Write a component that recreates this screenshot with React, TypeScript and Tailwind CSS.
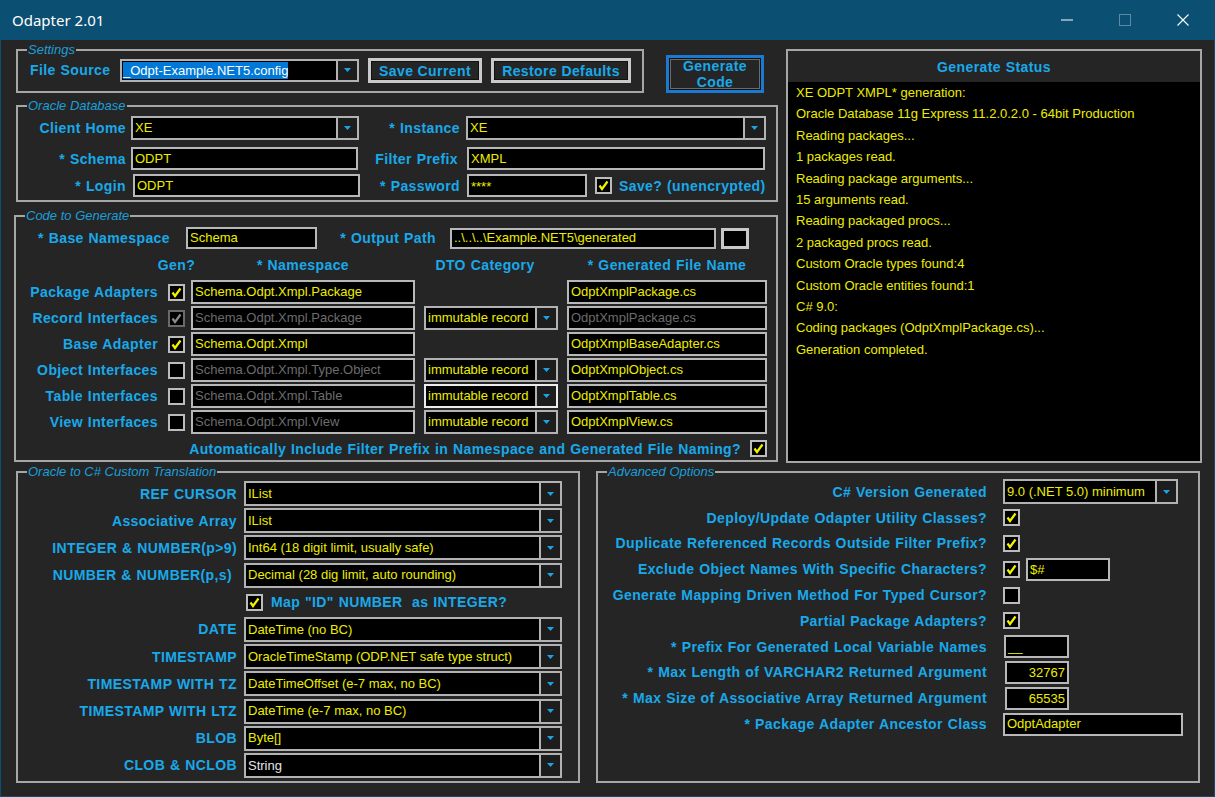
import React from 'react';

type Tone = 'yellow' | 'dim' | 'white';

const toneClass = (t: Tone) =>
  t === 'dim' ? 'text-[#6c6c6c]' : t === 'white' ? 'text-[#e4e4e4]' : 'text-[#eded00]';

function Arrow() {
  return (
    <svg width="7" height="4" viewBox="0 0 7 4">
      <path d="M0 0H7L3.5 4Z" fill="#1ba3e3" />
    </svg>
  );
}

function Lbl({ className = '', children }: { className?: string; children?: React.ReactNode }) {
  return (
    <span
      className={`shrink-0 whitespace-nowrap text-[14px] font-bold leading-[16px] tracking-[0.4px] text-[#19a9ea] [word-spacing:0.5px] ${className}`}
    >
      {children}
    </span>
  );
}

function Combo({ className, value, tone = 'yellow', hot }: { className: string; value: string; tone?: Tone; hot?: boolean }) {
  return (
    <div className={`flex shrink-0 border-2 bg-black ${hot ? 'border-[#ececec]' : 'border-[#b2b2b2]'} ${className}`}>
      <div className={`flex flex-1 items-center overflow-hidden whitespace-nowrap pl-[2px] text-[13px] ${toneClass(tone)}`}>
        {value}
      </div>
      <div className="flex w-[21px] items-center justify-center border-l-2 border-[#b2b2b2] bg-[#1d1d1d]">
        <Arrow />
      </div>
    </div>
  );
}

function TextBox({ className, value, tone = 'yellow', right }: { className: string; value: string; tone?: Tone; right?: boolean }) {
  return (
    <div
      className={`flex shrink-0 items-center overflow-hidden whitespace-nowrap border-2 border-[#b8b8b8] bg-black px-[2px] text-[13px] ${
        right ? 'justify-end' : ''
      } ${toneClass(tone)} ${className}`}
    >
      {value}
    </div>
  );
}

function Check({ on, dim, className = '' }: { on?: boolean; dim?: boolean; className?: string }) {
  return (
    <div
      className={`flex h-[17px] w-[17px] shrink-0 items-center justify-center border-2 bg-black ${
        dim ? 'border-[#6a6a6a]' : 'border-[#bcbcbc]'
      } ${className}`}
    >
      {on && (
        <svg width="11" height="11" viewBox="0 0 11 11">
          <path d="M1.5 5.5L4 9L9.5 1.5" fill="none" stroke={dim ? '#8a8a8a' : '#f2f200'} strokeWidth="2.2" />
        </svg>
      )}
    </div>
  );
}

function Group({ title, className, children }: { title: string; className: string; children?: React.ReactNode }) {
  return (
    <fieldset className={`shrink-0 border-2 border-[#a6a6a6] ${className}`}>
      <legend className="ml-[9px] px-[1px] text-[13px] italic leading-[14px] text-[#1b9fd9]">{title}</legend>
      {children}
    </fieldset>
  );
}

const genRows: {
  label: string;
  on: boolean;
  chkDim?: boolean;
  ns: string;
  nsTone: Tone;
  dto: string | null;
  hot?: boolean;
  file: string;
  fileTone: Tone;
}[] = [
  { label: 'Package Adapters', on: true, ns: 'Schema.Odpt.Xmpl.Package', nsTone: 'yellow', dto: null, file: 'OdptXmplPackage.cs', fileTone: 'yellow' },
  { label: 'Record Interfaces', on: true, chkDim: true, ns: 'Schema.Odpt.Xmpl.Package', nsTone: 'dim', dto: 'immutable record', file: 'OdptXmplPackage.cs', fileTone: 'dim' },
  { label: 'Base Adapter', on: true, ns: 'Schema.Odpt.Xmpl', nsTone: 'yellow', dto: null, file: 'OdptXmplBaseAdapter.cs', fileTone: 'yellow' },
  { label: 'Object Interfaces', on: false, ns: 'Schema.Odpt.Xmpl.Type.Object', nsTone: 'dim', dto: 'immutable record', file: 'OdptXmplObject.cs', fileTone: 'yellow' },
  { label: 'Table Interfaces', on: false, ns: 'Schema.Odpt.Xmpl.Table', nsTone: 'dim', dto: 'immutable record', hot: true, file: 'OdptXmplTable.cs', fileTone: 'yellow' },
  { label: 'View Interfaces', on: false, ns: 'Schema.Odpt.Xmpl.View', nsTone: 'dim', dto: 'immutable record', file: 'OdptXmplView.cs', fileTone: 'yellow' },
];

const statusLines = [
  'XE ODPT XMPL* generation:',
  'Oracle Database 11g Express 11.2.0.2.0 - 64bit Production',
  'Reading packages...',
  '1 packages read.',
  'Reading package arguments...',
  '15 arguments read.',
  'Reading packaged procs...',
  '2 packaged procs read.',
  'Custom Oracle types found:4',
  'Custom Oracle entities found:1',
  'C# 9.0:',
  'Coding packages (OdptXmplPackage.cs)...',
  'Generation completed.',
];

const typeMap: { label: string; value: string; tone?: Tone; pad?: boolean }[] = [
  { label: 'REF CURSOR', value: 'IList' },
  { label: 'Associative Array', value: 'IList' },
  { label: 'INTEGER & NUMBER(p>9)', value: 'Int64 (18 digit limit, usually safe)' },
  { label: 'NUMBER & NUMBER(p,s)', value: 'Decimal (28 dig limit, auto rounding)', pad: true },
];

const typeMap2: { label: string; value: string; tone?: Tone }[] = [
  { label: 'DATE', value: 'DateTime (no BC)' },
  { label: 'TIMESTAMP', value: 'OracleTimeStamp (ODP.NET safe type struct)' },
  { label: 'TIMESTAMP WITH TZ', value: 'DateTimeOffset (e-7 max, no BC)' },
  { label: 'TIMESTAMP WITH LTZ', value: 'DateTime (e-7 max, no BC)' },
  { label: 'BLOB', value: 'Byte[]' },
  { label: 'CLOB & NCLOB', value: 'String', tone: 'white' },
];

function TypeRow({ label, value, tone, pad }: { label: string; value: string; tone?: Tone; pad?: boolean }) {
  return (
    <div className="flex h-[25px] items-center">
      <Lbl className={`w-[219px] text-right ${pad ? 'pr-[5px]' : ''}`}>{label}</Lbl>
      <Combo className="ml-[7px] h-[25px] w-[318px]" value={value} tone={tone} />
    </div>
  );
}

function AdvRow({ label, children }: { label: string; children?: React.ReactNode }) {
  return (
    <div className="flex h-[25.8px] items-center">
      <Lbl className="w-[389px] text-right">{label}</Lbl>
      <div className="ml-[16px] flex items-center">{children}</div>
    </div>
  );
}

const btn =
  'shrink-0 border-[3px] border-[#cacaca] bg-[#252525] text-[14px] font-bold tracking-[0.4px] text-[#19a9ea] shadow-[inset_0_0_0_1px_#111]';

export default function App() {
  return (
    <div className="flex h-[797px] w-[1215px] flex-col overflow-hidden bg-[#0b4f73] font-['Liberation_Sans',Arial,sans-serif]">
      {/* title bar */}
      <div className="flex h-[40px] shrink-0 items-center">
        <span className="ml-[12px] font-['Noto_Sans',sans-serif] text-[15px] text-white">Odapter 2.01</span>
        <div className="ml-auto mr-[3px] flex h-full">
          <div className="flex w-[58px] items-center justify-center">
            <svg width="12" height="2" viewBox="0 0 12 2">
              <path d="M0 1H12" stroke="#ffffff" strokeWidth="1" />
            </svg>
          </div>
          <div className="flex w-[58px] items-center justify-center">
            <svg width="12" height="12" viewBox="0 0 12 12">
              <rect x="0.5" y="0.5" width="11" height="11" fill="none" stroke="#5f8aa3" strokeWidth="1" />
            </svg>
          </div>
          <div className="flex w-[58px] items-center justify-center">
            <svg width="12" height="12" viewBox="0 0 12 12">
              <path d="M0.5 0.5L11.5 11.5M11.5 0.5L0.5 11.5" stroke="#ffffff" strokeWidth="1.1" />
            </svg>
          </div>
        </div>
      </div>

      {/* window body */}
      <div className="flex flex-1 flex-col border-x border-b border-[#0b4f73] bg-[#252525]">
        <div className="flex">
          <div className="ml-[13px] flex w-[764px] flex-col">
            {/* Settings + Generate */}
            <div className="mt-[3px] flex items-start">
              <Group title="Settings" className="ml-[2px] h-[50px] w-[628px]">
                <div className="flex h-[25px] items-center pl-[12px] pt-[1px]">
                  <Lbl className="w-[90px]">File Source</Lbl>
                  <div className="flex h-[23px] w-[239px] shrink-0 border-2 border-[#b2b2b2] bg-black">
                    <div className="flex flex-1 items-center pl-[1px]">
                      <span className="bg-[#0078d7] text-[13px] leading-[17px] text-white">_Odpt-Example.NET5.config</span>
                    </div>
                    <div className="flex w-[21px] items-center justify-center border-l-2 border-[#b2b2b2] bg-[#1d1d1d]">
                      <Arrow />
                    </div>
                  </div>
                  <button className={`ml-[9px] h-[25px] w-[114px] ${btn}`}>Save Current</button>
                  <button className={`ml-[9px] h-[25px] w-[140px] ${btn}`}>Restore Defaults</button>
                </div>
              </Group>
              <button className="ml-[22px] mt-[12px] flex h-[38px] w-[98px] shrink-0 flex-col items-center justify-center border-[3px] border-[#1a7ad2] bg-[#252525] text-[14px] font-bold leading-[16px] tracking-[0.4px] text-[#19a9ea] shadow-[inset_0_0_0_1px_#111,inset_0_0_0_2px_#6a6a6a]">
                <span>Generate</span>
                <span>Code</span>
              </button>
            </div>

            {/* Oracle Database */}
            <Group title="Oracle Database" className="ml-[2px] mt-[6px] h-[103px] w-[762px]">
              <div className="flex flex-col pt-[3px]">
                <div className="flex h-[24px] items-center">
                  <Lbl className="w-[108px] text-right">Client Home</Lbl>
                  <Combo className="ml-[5px] h-[24px] w-[228px]" value="XE" />
                  <Lbl className="w-[101px] text-right">* Instance</Lbl>
                  <Combo className="ml-[6px] h-[24px] w-[300px]" value="XE" />
                </div>
                <div className="mt-[7px] flex h-[23px] items-center">
                  <Lbl className="w-[108px] text-right">* Schema</Lbl>
                  <TextBox className="ml-[5px] h-[23px] w-[227px]" value="ODPT" />
                  <Lbl className="w-[100px] text-right">Filter Prefix</Lbl>
                  <TextBox className="ml-[9px] h-[23px] w-[298px]" value="XMPL" />
                </div>
                <div className="mt-[4px] flex h-[23px] items-center">
                  <Lbl className="w-[108px] text-right">* Login</Lbl>
                  <TextBox className="ml-[7px] h-[23px] w-[227px]" value="ODPT" />
                  <Lbl className="w-[100px] text-right">* Password</Lbl>
                  <TextBox className="ml-[7px] h-[23px] w-[120px] items-start pt-[1px]" value="****" />
                  <Check on className="ml-[8px]" />
                  <Lbl className="ml-[7px]">Save? (unencrypted)</Lbl>
                </div>
              </div>
            </Group>

            {/* Code to Generate */}
            <Group title="Code to Generate" className="mt-[7px] h-[253px] w-[764px]">
              <div className="flex flex-col pt-[4px]">
                <div className="flex h-[22px] items-center">
                  <Lbl className="w-[154px] text-right">* Base Namespace</Lbl>
                  <TextBox className="ml-[16px] h-[22px] w-[131px]" value="Schema" />
                  <Lbl className="w-[119px] text-right">* Output Path</Lbl>
                  <TextBox className="ml-[14px] h-[21px] w-[266px]" value="..\..\..\Example.NET5\generated" />
                  <div className="ml-[5px] h-[21px] w-[28px] shrink-0 border-[3px] border-[#c8c8c8] bg-black" />
                </div>

                <div className="mt-[8px] flex h-[16px] items-center">
                  <div className="w-[142px] shrink-0" />
                  <div className="ml-[10px] flex w-[17px] shrink-0 justify-center">
                    <Lbl>Gen?</Lbl>
                  </div>
                  <div className="ml-[6px] flex w-[224px] shrink-0 justify-center">
                    <Lbl>* Namespace</Lbl>
                  </div>
                  <div className="ml-[9px] flex w-[134px] shrink-0 justify-center pr-[12px]">
                    <Lbl>DTO Category</Lbl>
                  </div>
                  <div className="ml-[9px] flex w-[200px] shrink-0 justify-center">
                    <Lbl>* Generated File Name</Lbl>
                  </div>
                </div>

                <div className="mt-[7px] flex flex-col gap-[2px]">
                  {genRows.map((r) => (
                    <div key={r.label} className="flex h-[24px] items-center">
                      <Lbl className="w-[142px] text-right">{r.label}</Lbl>
                      <Check on={r.on} dim={r.chkDim} className="ml-[10px]" />
                      <TextBox className="ml-[6px] h-[24px] w-[224px]" value={r.ns} tone={r.nsTone} />
                      {r.dto ? (
                        <Combo className="ml-[9px] h-[24px] w-[134px]" value={r.dto} hot={r.hot} />
                      ) : (
                        <div className="ml-[9px] w-[134px] shrink-0" />
                      )}
                      <TextBox className="ml-[9px] h-[24px] w-[200px]" value={r.file} tone={r.fileTone} />
                    </div>
                  ))}
                </div>

                <div className="mt-[6px] flex h-[17px] items-center justify-end gap-[9px] pr-[9px]">
                  <Lbl>Automatically Include Filter Prefix in Namespace and Generated File Naming?</Lbl>
                  <Check on />
                </div>
              </div>
            </Group>
          </div>

          {/* Generate Status */}
          <div className="ml-[8px] mt-[9px] flex h-[414px] w-[416px] shrink-0 flex-col border-2 border-[#a6a6a6]">
            <div className="flex h-[31px] shrink-0 items-center justify-center bg-[#252525]">
              <Lbl>Generate Status</Lbl>
            </div>
            <div className="flex-1 bg-black pl-[8px] text-[13px] leading-[21.4px] text-[#eded00]">
              {statusLines.map((l) => (
                <div key={l} className="whitespace-nowrap">
                  {l}
                </div>
              ))}
            </div>
          </div>
        </div>

        {/* bottom groups */}
        <div className="mt-[2px] flex">
          <Group title="Oracle to C# Custom Translation" className="ml-[15px] h-[318px] w-[564px]">
            <div className="flex flex-col gap-[2.2px] pt-[2px]">
              {typeMap.map((t) => (
                <TypeRow key={t.label} {...t} />
              ))}
              <div className="flex h-[25px] items-center pl-[228px]">
                <Check on />
                <Lbl className="ml-[8px]">Map "ID" NUMBER&nbsp; as INTEGER?</Lbl>
              </div>
              {typeMap2.map((t) => (
                <TypeRow key={t.label} {...t} />
              ))}
            </div>
          </Group>

          <Group title="Advanced Options" className="ml-[16px] h-[318px] w-[604px]">
            <div className="flex flex-col">
              <AdvRow label="C# Version Generated">
                <Combo className="h-[25px] w-[175px]" value="9.0 (.NET 5.0) minimum" />
              </AdvRow>
              <AdvRow label="Deploy/Update Odapter Utility Classes?">
                <Check on />
              </AdvRow>
              <AdvRow label="Duplicate Referenced Records Outside Filter Prefix?">
                <Check on />
              </AdvRow>
              <AdvRow label="Exclude Object Names With Specific Characters?">
                <Check on />
                <TextBox className="ml-[6px] h-[23px] w-[84px]" value="$#" />
              </AdvRow>
              <AdvRow label="Generate Mapping Driven Method For Typed Cursor?">
                <Check />
              </AdvRow>
              <AdvRow label="Partial Package Adapters?">
                <Check on />
              </AdvRow>
              <AdvRow label="* Prefix For Generated Local Variable Names">
                <TextBox className="ml-[1px] h-[23px] w-[65px]" value="__" />
              </AdvRow>
              <AdvRow label="* Max Length of VARCHAR2 Returned Argument">
                <TextBox className="ml-[2px] h-[23px] w-[64px]" value="32767" right />
              </AdvRow>
              <AdvRow label="* Max Size of Associative Array Returned Argument">
                <TextBox className="ml-[2px] h-[23px] w-[64px]" value="65535" right />
              </AdvRow>
              <AdvRow label="* Package Adapter Ancestor Class">
                <TextBox className="h-[23px] w-[180px]" value="OdptAdapter" />
              </AdvRow>
            </div>
          </Group>
        </div>
      </div>
    </div>
  );
}
